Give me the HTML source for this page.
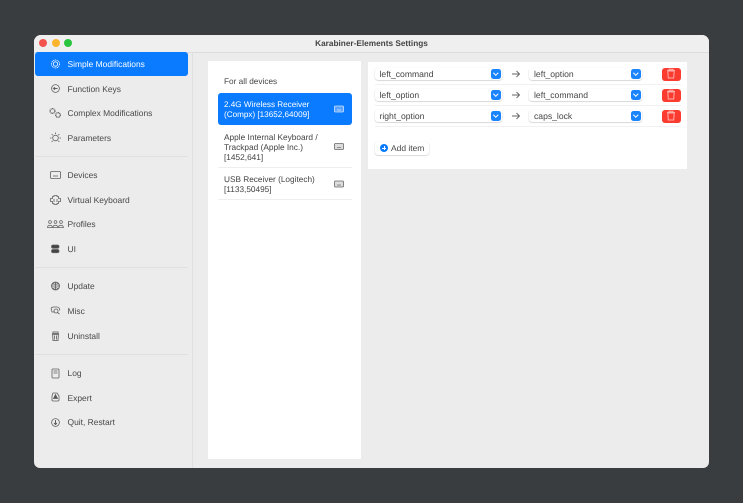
<!DOCTYPE html>
<html><head><meta charset="utf-8"><style>
html,body{margin:0;padding:0}
html{background:#3a3d40}
body{width:743px;height:503px;background:#3a3d40;position:relative;overflow:hidden;font-family:"Liberation Sans",sans-serif;font-size:8.45px;color:#444;text-rendering:geometricPrecision;filter:blur(.35px)}
div{position:absolute;box-sizing:border-box;white-space:nowrap}
svg{position:absolute;overflow:visible}
#win{left:34px;top:35px;width:675px;height:433px;background:#ececec;border-radius:7px 7px 6px 6px;overflow:hidden}
.t{line-height:12px}
.s{left:67.5px;color:#484848}
.ic{fill:none;stroke:#5f5f5f;stroke-width:.8}
.sep{left:34.5px;width:153px;height:1px;background:#e0e0e0}
.d{font-size:8.25px}
.row{left:374.5px;width:127px;height:12.5px;background:#fff;border-radius:3px;box-shadow:0 .5px 1.2px rgba(0,0,0,.28)}
.row.r{left:528.5px;width:113px}
.row span{position:absolute;left:5px;top:0;line-height:12.5px;color:#444;font-size:8.6px}
.row.r span{left:5.5px}
.row i{position:absolute;right:.5px;top:1.2px;width:10px;height:10px;border-radius:2.5px;background:#1a84ff}
.row i:after{content:"";position:absolute;left:3.2px;top:2.6px;width:2.6px;height:2.6px;border-right:1px solid #fff;border-bottom:1px solid #fff;transform:rotate(45deg)}
.del{left:661.5px;width:19px;height:13px;background:#fb3a30;border-radius:3px}
.hl{left:375px;width:306px;height:1px;background:#f1f1f1}
</style></head><body>
<div id="win"></div>
<div style="left:34px;top:35px;width:675px;height:17.5px;background:#efefef;border-radius:7px 7px 0 0;border-bottom:1px solid #dcdcdc"></div>
<div style="left:192px;top:52px;width:1px;height:416px;background:#e0e0e0"></div>
<div class="t" style="left:34px;width:675px;top:38px;text-align:center;font-weight:bold;font-size:8.25px;color:#444">Karabiner-Elements Settings</div>
<div style="left:39px;top:39px;width:8px;height:8px;border-radius:50%;background:#f2544d"></div>
<div style="left:51.5px;top:39px;width:8px;height:8px;border-radius:50%;background:#fcb42e"></div>
<div style="left:63.5px;top:39px;width:8px;height:8px;border-radius:50%;background:#2ac53f"></div>

<div style="left:34.5px;top:52px;width:153px;height:24px;background:#0a7bff;border-radius:3px"></div>
<div class="t s" style="top:58px;color:#fff">Simple Modifications</div>
<div class="t s" style="top:82.5px">Function Keys</div>
<div class="t s" style="top:107px">Complex Modifications</div>
<div class="t s" style="top:131.5px">Parameters</div>
<div class="sep" style="top:155.5px"></div>
<div class="t s" style="top:169px">Devices</div>
<div class="t s" style="top:193.5px">Virtual Keyboard</div>
<div class="t s" style="top:218px">Profiles</div>
<div class="t s" style="top:242.5px">UI</div>
<div class="sep" style="top:267px"></div>
<div class="t s" style="top:280px">Update</div>
<div class="t s" style="top:304.5px">Misc</div>
<div class="t s" style="top:329.5px">Uninstall</div>
<div class="sep" style="top:354px"></div>
<div class="t s" style="top:367px">Log</div>
<div class="t s" style="top:391.5px">Expert</div>
<div class="t s" style="top:416px">Quit, Restart</div>

<svg style="left:0;top:0" width="743" height="503" class="ic">
<g stroke="#fff"><circle cx="55.5" cy="64" r="4" stroke-dasharray="1.2 .6"/><circle cx="55.5" cy="64" r="2.2"/></g>
<circle cx="55.5" cy="88.5" r="3.9"/><path d="M53.5 88.5h4M55 87.3l-1.5 1.2 1.5 1.2" stroke-width="1"/>
<circle cx="52.5" cy="111" r="2.4" stroke-width="1.3" stroke-dasharray="1 .5"/><circle cx="58" cy="115" r="2.3" stroke-width="1.3" stroke-dasharray="1 .5"/>
<circle cx="55.5" cy="138" r="2.8"/><path d="M50 138h1.5M59.5 138h1.5M55.5 132.5v1.5M51.7 134.2l1 1M59.3 134.2l-1 1M51.7 141.8l1-1M59.3 141.8l-1-1"/>
<rect x="50.5" y="171.5" width="10" height="7" rx="1.2"/><path d="M53 176h5"/>
<path d="M52.5 196.5h1.5v-1h3v1h1.5v2h2v3h-2v2h-1.5v1h-3v-1h-1.5v-2h-2v-3h2zM54 199v3M57 199v3"/>
<g stroke-width=".7"><circle cx="50" cy="222" r="1.4"/><circle cx="55.5" cy="222" r="1.4"/><circle cx="61" cy="222" r="1.4"/><path d="M47.5 227.5c0-3 4.5-3 5 0zM53 227.5c0-3 4.5-3 5 0zM58.5 227.5c0-3 4.5-3 5 0z"/></g>
<rect x="51.5" y="245" width="7.5" height="3.2" rx="1.6" fill="#444"/><rect x="51.5" y="249.5" width="7.5" height="3.2" rx="1.6" fill="#444"/>
<circle cx="55.5" cy="286" r="3.9" stroke-width="1"/><path d="M51.6 286h7.8M55.5 282v8M52.5 283.5c2 1 4 1 6 0M52.5 288.5c2-1 4-1 6 0"/>
<path d="M51 308l2-1h4c2 0 3 2 2.6 3.5M51 308l1 4h3"/><circle cx="56" cy="311" r="2"/><path d="M57.5 312.5l2 1.5"/>
<path d="M52 333.5h7M53 333.5v-1.5h5v1.5M52.5 334.5l.5 6h5l.5-6zM54.5 335.5v4M56.5 335.5v4" stroke="#777" stroke-width="1"/>
<rect x="52" y="369" width="7" height="9" rx=".8"/><path d="M53.5 371h4M53.5 373h4"/>
<path d="M53 393h4l2 3v4a1 1 0 0 1-1 1h-5a1 1 0 0 1-1-1v-4z"/><path d="M55.5 394.5l2 4h-4z" fill="#555"/>
<circle cx="55.5" cy="422.5" r="3.9"/><path d="M55.5 420v4M54 423l1.5 1.500 1.500-1.500" stroke-width="1"/>
</svg>

<div style="left:208px;top:61px;width:153px;height:398px;background:#fff"></div>
<div class="t d" style="left:224px;top:76px;color:#444">For all devices</div>
<div style="left:218px;top:92.5px;width:133.5px;height:32px;background:#0a7bff;border-radius:3px"></div>
<div class="t d" style="left:224px;top:100px;color:#fff;line-height:10px;font-size:8.15px">2.4G Wireless Receiver<br>(Compx) [13652,64009]</div>
<div class="t d" style="left:224px;top:132px;line-height:10px;color:#444;font-size:8.3px">Apple Internal Keyboard /<br>Trackpad (Apple Inc.)<br>[1452,641]</div>
<div style="left:218px;top:167px;width:133.5px;height:1px;background:#eee"></div>
<div class="t d" style="left:224px;top:175px;line-height:10px;color:#444">USB Receiver (Logitech)<br>[1133,50495]</div>
<div style="left:218px;top:199px;width:133.5px;height:1px;background:#eee"></div>
<svg style="left:0;top:0" width="743" height="503" fill="none">
<rect x="334.5" y="106" width="9" height="6" rx="1" stroke="#cfe3ff" stroke-width=".8" fill="#5aa3ff"/><path d="M337 110h4" stroke="#e6f0ff" stroke-width=".7"/>
<rect x="334.5" y="143.5" width="9" height="6" rx="1" stroke="#666" stroke-width=".8" fill="#ddd"/><path d="M337 147.5h4" stroke="#666" stroke-width=".7"/>
<rect x="334.5" y="181" width="9" height="6" rx="1" stroke="#666" stroke-width=".8" fill="#ddd"/><path d="M337 185h4" stroke="#666" stroke-width=".7"/>
</svg>

<div style="left:368px;top:61.5px;width:318.5px;height:107.5px;background:#fff"></div>
<div class="row" style="top:67.5px"><span>left_command</span><i></i></div>
<div class="row r" style="top:67.5px"><span>left_option</span><i></i></div>
<div class="del" style="top:67.5px"></div>
<div class="hl" style="top:84px"></div>
<div class="row" style="top:88.5px"><span>left_option</span><i></i></div>
<div class="row r" style="top:88.5px"><span>left_command</span><i></i></div>
<div class="del" style="top:88.5px"></div>
<div class="hl" style="top:105px"></div>
<div class="row" style="top:109.5px"><span>right_option</span><i></i></div>
<div class="row r" style="top:109.5px"><span>caps_lock</span><i></i></div>
<div class="del" style="top:109.5px"></div>
<div class="hl" style="top:126px"></div>
<svg style="left:0;top:0" width="743" height="503" fill="none">
<g stroke="#666" stroke-width=".9"><path d="M512 74h7.5M516.5 71l3 3-3 3"/><path d="M512 95h7.5M516.5 92l3 3-3 3"/><path d="M512 116h7.5M516.5 113l3 3-3 3"/></g>
<g stroke="#ffb0aa" stroke-width="1"><path d="M667 70.5h8M669 70.5v-1.2h4v1.2M667.8 71l.5 7h5.4l.5-7z"/><path d="M667 91.5h8M669 91.5v-1.2h4v1.2M667.8 92l.5 7h5.4l.5-7z"/><path d="M667 112.5h8M669 112.5v-1.2h4v1.2M667.8 113l.5 7h5.4l.5-7z"/></g>
</svg>
<div style="left:374.5px;top:142px;width:54.5px;height:12.5px;background:#fff;border-radius:3px;box-shadow:0 .5px 1.2px rgba(0,0,0,.28)"></div>
<div style="left:380px;top:144px;width:8px;height:8px;border-radius:50%;background:#0a7bff"></div>
<div style="left:382px;top:147.5px;width:4px;height:1px;background:#fff"></div>
<div style="left:383.5px;top:146px;width:1px;height:4px;background:#fff"></div>
<div class="t" style="left:391px;top:142px;color:#444">Add item</div>
</body></html>
